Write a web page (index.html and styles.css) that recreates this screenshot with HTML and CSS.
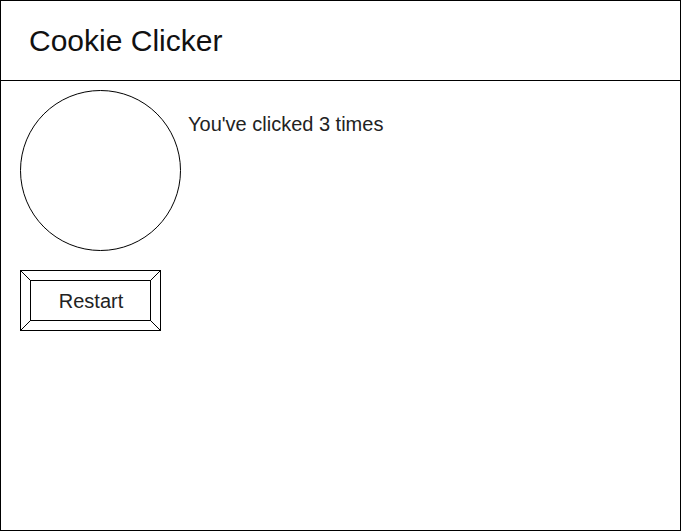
FILE: index.html
```html
<!DOCTYPE html>
<html>
<head>
<meta charset="utf-8">
<link rel="stylesheet" href="styles.css">
</head>
<body>
<div class="frame">
  <header class="header">
    <h1 class="title">Cookie Clicker</h1>
  </header>
  <main class="content">
    <div class="row">
      <div class="cookie"></div>
      <p class="count">You've clicked 3 times</p>
    </div>
    <button class="restart">
      <svg class="bevel" width="141" height="61" viewBox="0 0 141 61">
        <g fill="none" stroke="#000" stroke-width="1">
          <rect x="0.5" y="0.5" width="140" height="60"/>
          <rect x="10.5" y="10.5" width="120" height="40"/>
          <line x1="0.5" y1="0.5" x2="10.5" y2="10.5"/>
          <line x1="140.5" y1="0.5" x2="130.5" y2="10.5"/>
          <line x1="0.5" y1="60.5" x2="10.5" y2="50.5"/>
          <line x1="140.5" y1="60.5" x2="130.5" y2="50.5"/>
        </g>
      </svg>
      <span class="label">Restart</span>
    </button>
  </main>
</div>
</body>
</html>
```
FILE: styles.css
```css
html, body {
  margin: 0;
  padding: 0;
  background: #fff;
}
.frame {
  width: 681px;
  height: 531px;
  box-sizing: border-box;
  border: 1px solid #000;
  font-family: "Liberation Sans", Arial, sans-serif;
  display: flex;
  flex-direction: column;
}
.header {
  height: 80px;
  box-sizing: border-box;
  border-bottom: 1px solid #000;
  display: flex;
  align-items: center;
  padding-left: 28px;
}
.title {
  margin: 0;
  font-size: 30px;
  font-weight: normal;
  color: #111;
  line-height: 1;
}
.content {
  padding: 9px 19px;
  display: flex;
  flex-direction: column;
  align-items: flex-start;
  gap: 19px;
}
.row {
  display: flex;
  align-items: flex-start;
  gap: 7px;
}
.cookie {
  width: 161px;
  height: 161px;
  box-sizing: border-box;
  border: 1px solid #000;
  border-radius: 50%;
}
.count {
  margin: 23px 0 0;
  font-size: 20px;
  line-height: 23px;
  color: #222;
}
.restart {
  position: relative;
  width: 141px;
  height: 61px;
  padding: 0;
  border: none;
  background: #fff;
  font-family: inherit;
  font-size: 20px;
  color: #222;
  display: flex;
  align-items: center;
  justify-content: center;
}
.bevel {
  position: absolute;
  left: 0;
  top: 0;
}
.label {
  position: relative;
  padding-left: 1px;
  padding-top: 1px;
}
```
